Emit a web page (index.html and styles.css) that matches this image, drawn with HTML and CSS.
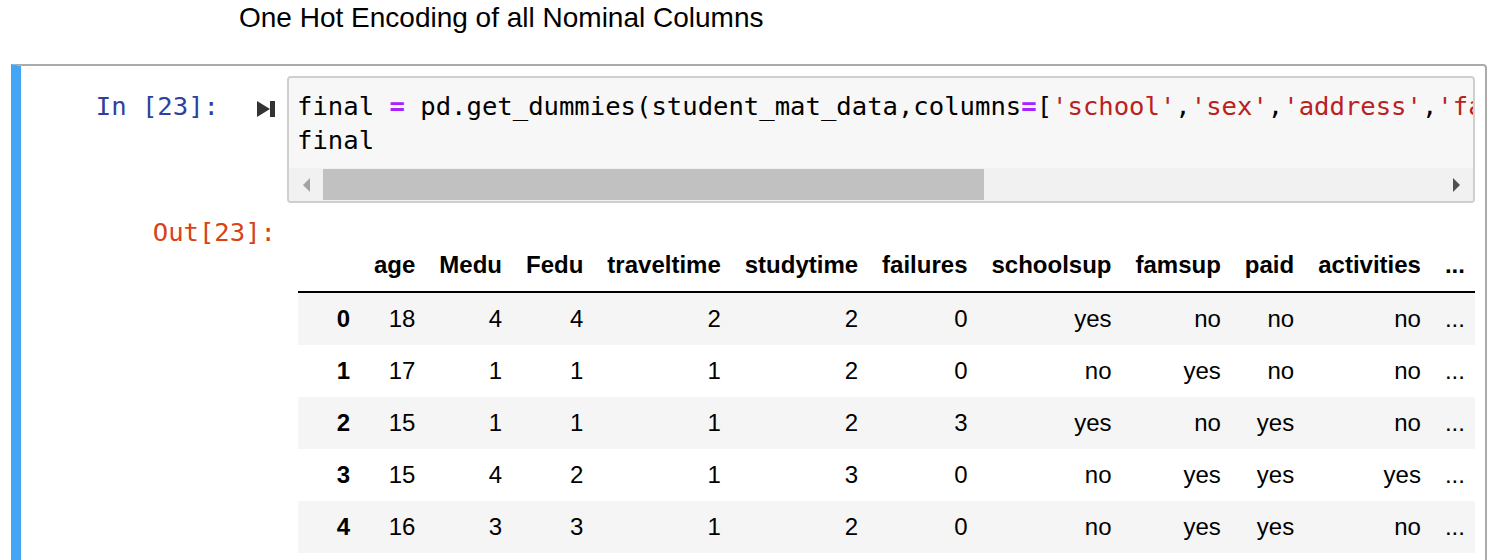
FILE: index.html
```html
<!DOCTYPE html>
<html lang="en">
<head>
<meta charset="utf-8">
<title>One Hot Encoding</title>
<link rel="stylesheet" href="styles.css">
</head>
<body>
<div class="title">One Hot Encoding of all Nominal Columns</div>
<div class="cell">
  <div class="input">
    <div class="prompt in-prompt">
      <span class="prompt-text">In [23]:</span>
      <svg class="run" width="18" height="16" viewBox="0 0 18 16" aria-hidden="true">
        <polygon points="0,0 13,8 0,16" fill="#333"/>
        <rect x="13" y="0" width="5" height="16" fill="#333"/>
      </svg>
    </div>
    <div class="input-area">
      <div class="code">final <span class="op">=</span> pd.get_dummies(student_mat_data,columns<span class="op">=</span>[<span class="str">'school'</span>,<span class="str">'sex'</span>,<span class="str">'address'</span>,<span class="str">'famsize'</span>])
final</div>
      <div class="hscroll">
        <div class="sb-btn"><span class="arrow-left"></span></div>
        <div class="sb-track"><div class="sb-thumb"></div></div>
        <div class="sb-btn"><span class="arrow-right"></span></div>
      </div>
    </div>
  </div>
  <div class="output">
    <div class="prompt out-prompt">Out[23]:</div>
    <div class="output-sub">
      <table class="dataframe">
        <thead>
          <tr>
            <th class="idx"></th><th>age</th><th>Medu</th><th>Fedu</th><th>traveltime</th><th>studytime</th><th>failures</th><th>schoolsup</th><th>famsup</th><th>paid</th><th>activities</th><th>...</th>
          </tr>
        </thead>
        <tbody>
          <tr><th class="idx">0</th><td>18</td><td>4</td><td>4</td><td>2</td><td>2</td><td>0</td><td>yes</td><td>no</td><td>no</td><td>no</td><td>...</td></tr>
          <tr><th class="idx">1</th><td>17</td><td>1</td><td>1</td><td>1</td><td>2</td><td>0</td><td>no</td><td>yes</td><td>no</td><td>no</td><td>...</td></tr>
          <tr><th class="idx">2</th><td>15</td><td>1</td><td>1</td><td>1</td><td>2</td><td>3</td><td>yes</td><td>no</td><td>yes</td><td>no</td><td>...</td></tr>
          <tr><th class="idx">3</th><td>15</td><td>4</td><td>2</td><td>1</td><td>3</td><td>0</td><td>no</td><td>yes</td><td>yes</td><td>yes</td><td>...</td></tr>
          <tr><th class="idx">4</th><td>16</td><td>3</td><td>3</td><td>1</td><td>2</td><td>0</td><td>no</td><td>yes</td><td>yes</td><td>no</td><td>...</td></tr>
        </tbody>
      </table>
    </div>
  </div>
</div>
</body>
</html>
```
FILE: styles.css
```css
html, body {
  margin: 0;
  padding: 0;
  background: #ffffff;
  overflow: hidden;
}

body {
  font-family: "Liberation Sans", Arial, sans-serif;
  color: #000000;
}

.title {
  margin-top: 1px;
  padding-left: 239px;
  font-size: 28px;
  line-height: 34px;
  color: #000000;
}

.cell {
  margin-top: 29px;
  margin-left: 11px;
  width: 1476px;
  box-sizing: border-box;
  border: 2px solid #ababab;
  border-left: 10px solid #42a5f5;
  border-radius: 0 4px 4px 0;
  padding: 10px;
}

.input,
.output {
  display: flex;
  align-items: flex-start;
}

.prompt {
  flex: none;
  width: 256px;
  box-sizing: border-box;
  padding-right: 11px;
  text-align: right;
  font-family: "DejaVu Sans Mono", monospace;
  font-size: 25.6px;
  line-height: 34px;
  white-space: nowrap;
}

.in-prompt {
  display: flex;
  justify-content: flex-end;
  align-items: flex-start;
  padding-top: 13px;
  color: #303f9f;
}

.run {
  flex: none;
  display: block;
  margin-left: 38px;
  margin-top: 12px;
  margin-right: 1px;
}

.out-prompt {
  padding-top: 12px;
  color: #d84315;
}

.input-area {
  flex: 1;
  min-width: 0;
  border: 2px solid #cfcfcf;
  border-radius: 4px;
  background: #f7f7f7;
  overflow: hidden;
}

.code {
  padding: 11px 0 11px 8px;
  font-family: "DejaVu Sans Mono", monospace;
  font-size: 25.6px;
  line-height: 34px;
  white-space: pre;
  overflow: hidden;
  color: #000000;
}

.op {
  color: #aa22ff;
  font-weight: bold;
}

.str {
  color: #ba2121;
}

.hscroll {
  display: flex;
  height: 33px;
  background: #f1f1f1;
}

.sb-btn {
  flex: none;
  width: 34px;
  display: flex;
  align-items: center;
  justify-content: center;
}

.arrow-left {
  width: 0;
  height: 0;
  border-top: 7px solid transparent;
  border-bottom: 7px solid transparent;
  border-right: 7px solid #a3a3a3;
}

.arrow-right {
  width: 0;
  height: 0;
  border-top: 7px solid transparent;
  border-bottom: 7px solid transparent;
  border-left: 7px solid #505050;
}

.sb-track {
  flex: 1;
  display: flex;
  align-items: center;
}

.sb-thumb {
  width: 661px;
  height: 31px;
  background: #c1c1c1;
}

.output-sub {
  flex: 1;
  min-width: 0;
  padding-left: 11px;
  overflow: hidden;
}

.dataframe {
  margin-top: 36px;
  border-collapse: separate;
  border-spacing: 0;
  border: none;
  font-size: 24px;
  line-height: 28px;
  color: #000000;
}

.dataframe th,
.dataframe td {
  padding: 12px;
  text-align: right;
  vertical-align: middle;
  white-space: nowrap;
}

.dataframe th {
  font-weight: bold;
}

.dataframe .idx {
  min-width: 40px;
}

.dataframe thead th {
  border-bottom: 2px solid #000000;
}

.dataframe tbody tr:nth-child(odd) {
  background: #f5f5f5;
}
```
